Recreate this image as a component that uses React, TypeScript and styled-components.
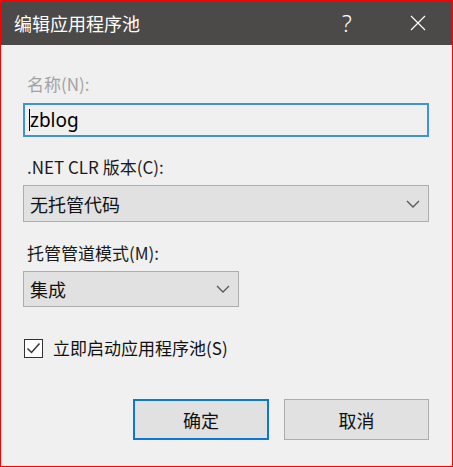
import React from "react";
import styled, { createGlobalStyle } from "styled-components";

const GlobalStyle = createGlobalStyle`
  html, body {
    margin: 0;
    padding: 0;
    background: #f0f0f0;
  }
  * {
    box-sizing: border-box;
  }
`;

const Window = styled.div`
  width: 453px;
  height: 467px;
  border: 1px solid #ff0000;
  background: #f0f0f0;
  display: flex;
  flex-direction: column;
  font-family: "Noto Sans CJK SC", "Noto Sans", sans-serif;
  color: #000;
`;

const TitleBar = styled.div`
  height: 44px;
  background: #4b4a48;
  display: flex;
  align-items: center;
  padding-left: 13px;
  padding-right: 11px;
  gap: 25px;
  color: #ffffff;
`;

const Title = styled.div`
  flex: 1;
  font-size: 18px;
  line-height: 20px;
`;

const TitleButton = styled.div`
  width: 46px;
  height: 44px;
  display: flex;
  align-items: center;
  justify-content: center;
  font-family: "Noto Sans", sans-serif;
  font-size: 23px;
  font-weight: 300;
`;

const Body = styled.div`
  flex: 1;
  display: flex;
  flex-direction: column;
  padding: 0 23px 0 22px;
`;

const Label = styled.div<{ $top: number; $disabled?: boolean }>`
  margin-top: ${(p) => p.$top}px;
  padding-left: 4px;
  font-size: 17px;
  line-height: 20px;
  color: ${(p) => (p.$disabled ? "#a3a3a3" : "#1a1a1a")};
`;

const TextBox = styled.div`
  margin-top: 9px;
  height: 34px;
  width: 100%;
  border: 2px solid #3d93e3;
  background: #f0f0f0;
  display: flex;
  align-items: center;
  padding-left: 4px;
  font-family: "Noto Sans", sans-serif;
  font-size: 19px;
`;

const Caret = styled.span`
  display: inline-block;
  width: 1px;
  height: 22px;
  background: #000;
  margin-right: 0;
`;

const Select = styled.div<{ $width?: number; $height: number }>`
  margin-top: 8px;
  width: ${(p) => (p.$width ? `${p.$width}px` : "100%")};
  height: ${(p) => p.$height}px;
  background: #e1e1e1;
  border: 1px solid #adadad;
  display: flex;
  align-items: center;
  justify-content: space-between;
  padding: 0 8px 0 6px;
  font-size: 18px;
  color: #111;
`;

const CheckRow = styled.label`
  margin-top: 31px;
  display: flex;
  align-items: center;
  gap: 10px;
  font-size: 17px;
  line-height: 20px;
  color: #111;
  padding-left: 1px;
`;

const CheckBox = styled.span`
  width: 19px;
  height: 19px;
  border: 1px solid #333;
  background: #ffffff;
  display: flex;
  align-items: center;
  justify-content: center;
`;

const ButtonRow = styled.div`
  margin-top: 41px;
  display: flex;
  justify-content: flex-end;
  gap: 15px;
`;

const Button = styled.button<{ $primary?: boolean; $width: number }>`
  width: ${(p) => p.$width}px;
  height: 41px;
  background: #e1e1e1;
  border: ${(p) => (p.$primary ? "2px solid #0a78d7" : "1px solid #adadad")};
  font-family: "Noto Sans CJK SC", "Noto Sans", sans-serif;
  font-size: 18px;
  color: #111;
  padding: 0;
`;

const Chevron = () => (
  <svg width="14" height="8" viewBox="0 0 14 8">
    <path d="M1 1 L7 7 L13 1" fill="none" stroke="#5a5a5a" strokeWidth="1.4" />
  </svg>
);

const CloseIcon = () => (
  <svg width="16" height="16" viewBox="0 0 16 16">
    <path d="M1 1 L15 15 M15 1 L1 15" fill="none" stroke="#ffffff" strokeWidth="1.2" />
  </svg>
);

const CheckMark = () => (
  <svg width="15" height="13" viewBox="0 0 15 13">
    <path d="M1.5 6.5 L5.5 10.5 L13.5 1.5" fill="none" stroke="#333" strokeWidth="1.5" />
  </svg>
);

export default function App() {
  return (
    <>
      <GlobalStyle />
      <Window>
        <TitleBar>
          <Title>编辑应用程序池</Title>
          <TitleButton>?</TitleButton>
          <TitleButton>
            <CloseIcon />
          </TitleButton>
        </TitleBar>
        <Body>
          <Label $top={29} $disabled>
            名称(N):
          </Label>
          <TextBox>
            <Caret />
            zblog
          </TextBox>
          <Label $top={20}>.NET CLR 版本(C):</Label>
          <Select $height={37}>
            <span>无托管代码</span>
            <Chevron />
          </Select>
          <Label $top={21}>托管管道模式(M):</Label>
          <Select $width={216} $height={36}>
            <span>集成</span>
            <Chevron />
          </Select>
          <CheckRow>
            <CheckBox>
              <CheckMark />
            </CheckBox>
            立即启动应用程序池(S)
          </CheckRow>
          <ButtonRow>
            <Button $primary $width={136}>
              确定
            </Button>
            <Button $width={145}>取消</Button>
          </ButtonRow>
        </Body>
      </Window>
    </>
  );
}
